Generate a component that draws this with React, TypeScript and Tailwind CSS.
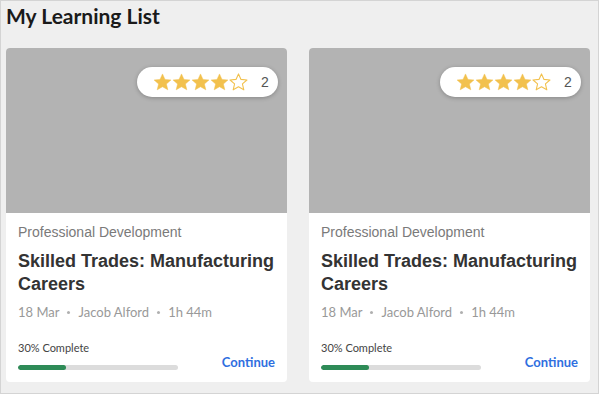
import React from "react";

function Star({ filled }: { filled: boolean }) {
  return (
    <svg width="19" height="18" viewBox="0 0 24 23">
      <path
        d="M12 1.2l3.2 7 7.6.7-5.8 5.1 1.8 7.5L12 17.6l-6.8 3.9 1.8-7.5-5.8-5.1 7.6-.7z"
        fill={filled ? "#f2c14e" : "none"}
        stroke="#f2c14e"
        strokeWidth={filled ? 0.6 : 1.4}
        strokeLinejoin="round"
      />
    </svg>
  );
}

function Dot() {
  return <span className="mx-[8px] w-[3px] h-[3px] rounded-full bg-[#b0b0b0]"></span>;
}

function Card() {
  return (
    <div className="w-[281px] rounded-[4px] bg-white overflow-hidden flex flex-col">
      <div className="relative h-[165px] bg-[#b3b3b3]">
        <div className="absolute right-[9px] top-[19px] h-[30px] w-[141px] rounded-full bg-white shadow-[0_1px_4px_rgba(0,0,0,0.25)] flex items-center pl-[16px]">
          <div className="flex items-center gap-0">
            <Star filled />
            <Star filled />
            <Star filled />
            <Star filled />
            <Star filled={false} />
          </div>
          <span className="ml-[13px] text-[14px] text-[#555] font-['Liberation_Sans',sans-serif]">2</span>
        </div>
      </div>
      <div className="px-[12px] pt-[10px] pb-[12px] flex flex-col">
        <div className="text-[14px] leading-[18px] text-[#7a7a7a] font-['Liberation_Sans',sans-serif]">
          Professional Development
        </div>
        <div className="mt-[9px] text-[18px] leading-[23px] font-bold text-[#333] font-['Liberation_Sans',sans-serif]">
          Skilled Trades: Manufacturing Careers
        </div>
        <div className="mt-[7px] flex items-center text-[13px] leading-[18px] text-[#999] font-['Lato',sans-serif]">
          <span>18 Mar</span>
          <Dot />
          <span>Jacob Alford</span>
          <Dot />
          <span>1h 44m</span>
        </div>
        <div className="mt-[20px] flex items-end justify-between">
          <div className="flex flex-col">
            <span className="text-[11px] leading-[14px] text-[#444] font-['Lato',sans-serif]">30% Complete</span>
            <div className="mt-[10px] h-[5px] w-[160px] rounded-full bg-[#dcdcdc] overflow-hidden">
              <div className="h-full w-[30%] rounded-full bg-[#2e8b57]"></div>
            </div>
          </div>
          <span className="text-[13px] leading-[16px] font-bold text-[#2f6fe0] font-['Lato',sans-serif]">
            Continue
          </span>
        </div>
      </div>
    </div>
  );
}

export default function App() {
  return (
    <div className="w-[599px] h-[394px] bg-[#efefef] border border-[#d4d4d4] box-border overflow-hidden">
      <div className="pl-[5px] pt-[2px] text-[21px] leading-[26px] font-bold text-[#1a1a1a] font-['Lato',sans-serif]">
        My Learning List
      </div>
      <div className="mt-[19px] pl-[5px] flex gap-[22px]">
        <Card />
        <Card />
      </div>
    </div>
  );
}
